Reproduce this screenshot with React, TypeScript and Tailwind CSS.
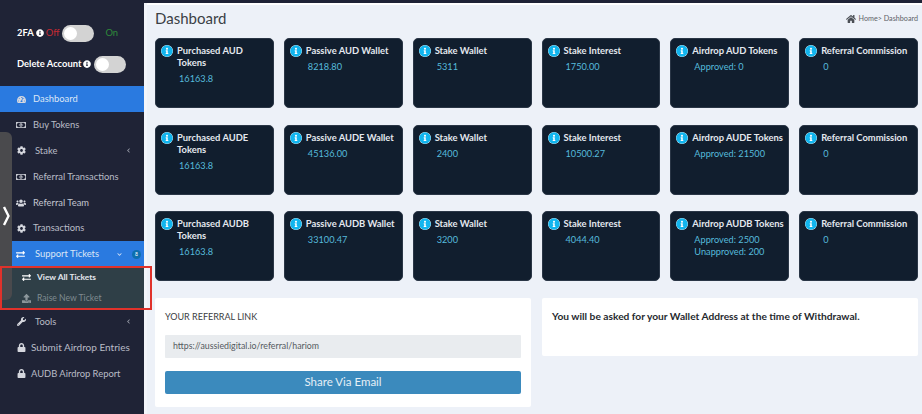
import React from "react";
import { FaTachometerAlt, FaRegMoneyBillAlt, FaCog, FaUsers, FaExchangeAlt, FaWrench, FaLock, FaUpload, FaHome, FaInfoCircle, FaChevronLeft, FaChevronDown } from "react-icons/fa";

type CardData = { title: string; values: string[] };

const rows: CardData[][] = [
  [
    { title: "Purchased AUD Tokens", values: ["16163.8"] },
    { title: "Passive AUD Wallet", values: ["8218.80"] },
    { title: "Stake Wallet", values: ["5311"] },
    { title: "Stake Interest", values: ["1750.00"] },
    { title: "Airdrop AUD Tokens", values: ["Approved: 0"] },
    { title: "Referral Commission", values: ["0"] },
  ],
  [
    { title: "Purchased AUDE Tokens", values: ["16163.8"] },
    { title: "Passive AUDE Wallet", values: ["45136.00"] },
    { title: "Stake Wallet", values: ["2400"] },
    { title: "Stake Interest", values: ["10500.27"] },
    { title: "Airdrop AUDE Tokens", values: ["Approved: 21500"] },
    { title: "Referral Commission", values: ["0"] },
  ],
  [
    { title: "Purchased AUDB Tokens", values: ["16163.8"] },
    { title: "Passive AUDB Wallet", values: ["33100.47"] },
    { title: "Stake Wallet", values: ["3200"] },
    { title: "Stake Interest", values: ["4044.40"] },
    { title: "Airdrop AUDB Tokens", values: ["Approved: 2500", "Unapproved: 200"] },
    { title: "Referral Commission", values: ["0"] },
  ],
];

function Card({ title, values }: CardData) {
  return (
    <div className="h-[70px] rounded-[5px] bg-[#111e2e] border border-[#2a3646] flex gap-[4px] pl-[5px] pr-1 pt-[6px]">
      <FaInfoCircle className="w-[12px] h-[12px] text-[#12b5ee] bg-white rounded-full shrink-0" />
      <div className="min-w-0">
        <div className="text-[9.4px] leading-[12px] font-bold text-[#e4e8ee]">{title}</div>
        <div className="mt-[4px] pl-[2px] leading-[12px] text-[9.2px] text-[#56bbdc]">
          {values.map((v) => (
            <div key={v}>{v}</div>
          ))}
        </div>
      </div>
    </div>
  );
}

function Toggle() {
  return (
    <span className="w-[32px] h-[17px] rounded-full bg-[#d3d3d3] flex items-center pl-[2px]">
      <span className="w-[13px] h-[13px] rounded-full bg-white" />
    </span>
  );
}

type NavProps = {
  icon: React.ReactNode;
  label: string;
  active?: boolean;
  gap?: string;
  trailing?: React.ReactNode;
  textClass?: string;
};

function Nav({ icon, label, active, gap = "gap-[7px]", trailing, textClass = "text-[9.4px] text-[#b9bcc6]" }: NavProps) {
  return (
    <div className={`h-[25.8px] flex items-center pl-[16px] pr-[13px] pt-[1px] ${gap} ${active ? "bg-[#2a7ae0]" : ""}`}>
      <span className="w-[10px] flex justify-center text-[#d5d7de] shrink-0">{icon}</span>
      <span className={`whitespace-nowrap ${textClass}`}>{label}</span>
      {trailing}
    </div>
  );
}

const sm = "w-[9px] h-[9px]";

export default function App() {
  return (
    <div className="w-[922px] h-[414px] overflow-hidden relative flex bg-[#edf1f8] font-['Lato',sans-serif]">
      <aside className="w-[147px] shrink-0 h-full bg-[#1f2336] border-r-[3px] border-[#f3f5fa] flex flex-col">
        <div className="h-[86px] shrink-0 flex flex-col pl-[17px] pt-[24px]">
          <div className="flex items-center h-[18px]">
            <span className="text-[9.4px] font-bold text-white">2FA</span>
            <FaInfoCircle className="w-[8px] h-[8px] text-white ml-[2px]" />
            <span className="text-[9.4px] text-[#c62a33] ml-[2px] mr-[3px]">Off</span>
            <Toggle />
            <span className="text-[9.4px] text-[#2e8b3a] ml-[11px]">On</span>
          </div>
          <div className="flex items-center h-[18px] mt-[13px]">
            <span className="text-[9.4px] font-bold text-white">Delete Account</span>
            <FaInfoCircle className="w-[8px] h-[8px] text-white ml-[2px]" />
            <span className="ml-[3px]"><Toggle /></span>
          </div>
        </div>
        <Nav active icon={<FaTachometerAlt className={sm} />} label="Dashboard" textClass="text-[9.4px] text-[#dbe6f6]" />
        <Nav icon={<FaRegMoneyBillAlt className="w-[10px] h-[10px]" />} label="Buy Tokens" />
        <Nav icon={<FaCog className={sm} />} label="Stake" gap="gap-[9px]" trailing={<FaChevronLeft className="w-[5px] h-[5px] text-[#9a9eaa] ml-auto" />} />
        <Nav icon={<FaRegMoneyBillAlt className="w-[10px] h-[10px]" />} label="Referral Transactions" />
        <Nav icon={<FaUsers className="w-[10px] h-[10px]" />} label="Referral Team" textClass="text-[9.4px] text-[#c3c6d0]" />
        <Nav icon={<FaCog className={sm} />} label="Transactions" />
        <div className="h-[25.8px] ml-[12px] pl-[4px] pt-[1px] flex items-center gap-[10px] bg-[#2a7ae0]">
          <FaExchangeAlt className="w-[9px] h-[9px] text-white shrink-0" />
          <span className="text-[9.4px] text-[#dbe6f6] whitespace-nowrap">Support Tickets</span>
          <FaChevronDown className="w-[5px] h-[5px] text-[#dbe6f6] ml-[8px]" />
          <span className="w-[9px] h-[9px] rounded-full bg-[#0d6fae] flex items-center justify-center text-[5px] leading-none text-white">8</span>
        </div>
        <div className="h-[42px] shrink-0 bg-[#2f3f47] flex flex-col">
          <div className="h-[21px] flex items-center pl-[22px] gap-[6px]">
            <FaExchangeAlt className="w-[9px] h-[9px] text-white" />
            <span className="text-[8.4px] font-bold text-[#e4e8ee] whitespace-nowrap">View All Tickets</span>
          </div>
          <div className="h-[21px] flex items-center pl-[22px] gap-[6px]">
            <FaUpload className="w-[9px] h-[9px] text-[#8c979c]" />
            <span className="text-[8.6px] text-[#7f8b90] whitespace-nowrap">Raise New Ticket</span>
          </div>
        </div>
        <Nav icon={<FaWrench className={sm} />} label="Tools" gap="gap-[9px]" trailing={<FaChevronLeft className="w-[5px] h-[5px] text-[#9a9eaa] ml-auto" />} />
        <Nav icon={<FaLock className={sm} />} label="Submit Airdrop Entries" gap="gap-[5px]" textClass="text-[10px] text-[#b9bcc6]" />
        <Nav icon={<FaLock className={sm} />} label="AUDB Airdrop Report" gap="gap-[5px]" />
      </aside>

      <main className="flex-1 min-w-0 flex flex-col">
        <div className="h-[3px] bg-[#1f2336] shrink-0 -ml-[3px]" />
        <div className="h-[2px] bg-white shrink-0" />
        <div className="h-[33px] shrink-0 flex items-center justify-between pl-[8px] pr-[4px] pb-[6px]">
          <h1 className="text-[15px] leading-none text-[#3b3f45]">Dashboard</h1>
          <div className="flex items-center gap-[3px] text-[7.2px] text-[#5d6268] pt-[2px]">
            <FaHome className="w-[10px] h-[10px] text-[#4b4f55]" />
            <span>Home&gt; Dashboard</span>
          </div>
        </div>
        <div className="grid grid-cols-6 gap-x-[10px] gap-y-[16.5px] pl-[8px] pr-[4px]">
          {rows.flat().map((c, i) => (
            <Card key={i} {...c} />
          ))}
        </div>
        <div className="grid grid-cols-2 gap-x-[11px] pl-[8px] pr-[4px] mt-[16.5px] items-start">
          <div className="h-[109px] bg-white rounded-[2px] px-[10px] pt-[12px]">
            <div className="text-[9px] leading-[14px] text-[#3a3d42]">YOUR REFERRAL LINK</div>
            <div className="h-[23px] mt-[11px] bg-[#e9ecef] rounded-[1px] flex items-center pl-2 text-[8.8px] text-[#555a60]">https://aussiedigital.io/referral/hariom</div>
            <div className="h-[23px] mt-[13px] bg-[#3b8abd] rounded-[2px] flex items-center justify-center text-[11.5px] text-[#e6eff6]">Share Via Email</div>
          </div>
          <div className="h-[58px] bg-white rounded-[2px] px-[10px] pt-[11px]">
            <div className="text-[10.2px] leading-[14px] font-bold text-[#26292e]">You will be asked for your Wallet Address at the time of Withdrawal.</div>
          </div>
        </div>
      </main>

      <div className="absolute left-0 top-[132px] w-[12px] h-[168px] bg-[#4a4a4d] rounded-tr-[6px] rounded-br-[6px] flex items-center justify-center">
        <svg viewBox="0 0 8 20" className="w-[8px] h-[20px]" fill="none" stroke="white" strokeWidth="2.4">
          <path d="M2 1 L6.5 10 L2 19" />
        </svg>
      </div>
      <div className="absolute left-0 top-[266px] w-[152px] h-[44px] border-2 border-[#e0322b]" />
    </div>
  );
}
